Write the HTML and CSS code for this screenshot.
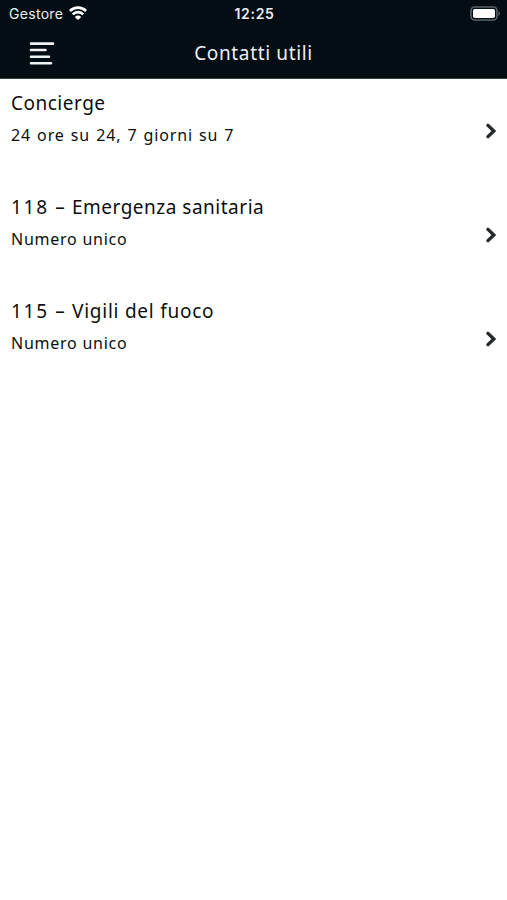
FILE: index.html
```html
<!DOCTYPE html>
<html lang="it">
<head>
  <meta charset="UTF-8" />
  <title>Contatti utili</title>
  <link rel="stylesheet" href="styles.css">
</head>
<body>

  <header>
    <div class="status-bar">
      <div class="carrier">
        <span>Gestore</span>
        <svg class="wifi" viewBox="0 0 18 14">
          <path d="M0.9 5 A11.5 11.5 0 0 1 17.1 5" />
          <path d="M3.7 8.4 A7.4 7.4 0 0 1 14.3 8.4" />
          <path class="dot" d="M9 14 L5.8 10.9 A4.6 4.6 0 0 1 12.2 10.9 Z" />
        </svg>
      </div>
      <span class="clock">12:25</span>
      <svg class="battery" viewBox="0 0 30 15">
        <rect class="shell" x="1" y="1" width="26" height="13" rx="3.8" />
        <rect class="level" x="3" y="3" width="22" height="9" rx="1.8" />
        <path class="tip" d="M28.4 5 A2.8 2.8 0 0 1 28.4 10 Z" />
      </svg>
    </div>
    <div class="nav-bar">
      <svg class="menu" viewBox="0 0 26 24">
        <path d="M2 2.6 H24 M2 9 H16.5 M2 15.8 H20 M2 22.2 H22" />
      </svg>
      <h1>Contatti utili</h1>
    </div>
  </header>

  <main class="contacts">
    <div class="contact">
      <div class="info">
        <h2>Concierge</h2>
        <p class="hours">24 ore su 24, 7 giorni su 7</p>
      </div>
      <svg class="chevron" viewBox="0 0 12 16"><path d="M3 2.4 L8.8 8 L3 13.6" /></svg>
    </div>
    <div class="contact">
      <div class="info">
        <h2><span class="number">118 –</span> Emergenza sanitaria</h2>
        <p>Numero unico</p>
      </div>
      <svg class="chevron" viewBox="0 0 12 16"><path d="M3 2.4 L8.8 8 L3 13.6" /></svg>
    </div>
    <div class="contact">
      <div class="info">
        <h2><span class="number">115 –</span> <span class="service">Vigili del fuoco</span></h2>
        <p>Numero unico</p>
      </div>
      <svg class="chevron" viewBox="0 0 12 16"><path d="M3 2.4 L8.8 8 L3 13.6" /></svg>
    </div>
  </main>

</body>
</html>
```
FILE: styles.css
```css
body {
  margin: 0;
  background-color: #fff;
  color: #0b0f12;
  font-family: 'Noto Sans', 'Open Sans', sans-serif;
}

header {
  box-sizing: border-box;
  height: 79px;
  background-color: #020d14;
  border-bottom: 1px solid #3a4349;
  color: #eceff1;
}

.status-bar {
  display: grid;
  grid-template-columns: 1fr auto 1fr;
  align-items: center;
  height: 27px;
  padding: 0 7px 0 9px;
  font-family: Inter, sans-serif;
  font-size: 14px;
}

.carrier {
  display: flex;
  align-items: center;
  gap: 6px;
  letter-spacing: 0.3px;
}

.wifi {
  width: 18px;
  height: 14px;
  margin-top: -1px;
  fill: none;
  stroke: #fff;
  stroke-width: 2.6;
}

.wifi .dot {
  fill: #fff;
  stroke: none;
}

.clock {
  font-weight: 600;
  letter-spacing: 0.7px;
}

.battery {
  width: 30px;
  height: 15px;
  justify-self: end;
}

.shell {
  fill: none;
  stroke: #5b6367;
  stroke-width: 1.6;
}

.level {
  fill: #fff;
}

.tip {
  fill: #5b6367;
}

.nav-bar {
  display: grid;
  grid-template-columns: 1fr auto 1fr;
  align-items: center;
  height: 51px;
}

.menu {
  width: 26px;
  height: 24px;
  margin-left: 29px;
  fill: none;
  stroke: #f1f2f4;
  stroke-width: 2.6;
  stroke-linecap: round;
}

h1 {
  margin: 0;
  font-size: 19px;
  font-weight: 400;
  letter-spacing: 0.65px;
}

.contact {
  display: flex;
  justify-content: space-between;
  align-items: center;
  box-sizing: border-box;
  height: 104px;
  padding: 0 10px 0 11px;
}

.info {
  height: 80px;
}

h2 {
  margin: -1px 0 0;
  font-size: 19px;
  font-weight: 400;
  line-height: 26px;
  letter-spacing: 0.5px;
}

.number {
  letter-spacing: 1.7px;
}

.service {
  letter-spacing: 0.75px;
}

p {
  margin: 7px 0 0;
  font-size: 16px;
  line-height: 24px;
  letter-spacing: 0.75px;
}

.hours {
  letter-spacing: 0.85px;
  word-spacing: 1.1px;
}

.chevron {
  width: 12px;
  height: 16px;
  fill: none;
  stroke: #26292b;
  stroke-width: 3.4;
  stroke-linecap: round;
}
```
